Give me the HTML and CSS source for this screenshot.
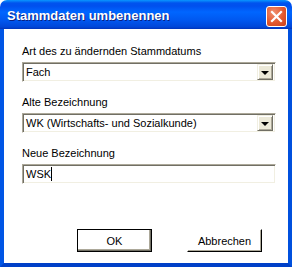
FILE: index.html
```html
<!DOCTYPE html>
<html lang="de">
<head>
    <meta charset="UTF-8">
    <title>Stammdaten umbenennen</title>
    <link rel="stylesheet" href="styles.css">
</head>
<body>
    <div class="window">
        <!-- Titelleiste -->
        <div class="titlebar">
            <span class="title">Stammdaten umbenennen</span>
            <div class="close">
                <svg width="13" height="13" viewBox="0 0 13 13">
                    <path d="M2 2 L11 11 M11 2 L2 11" stroke="#fff" stroke-width="2.2" stroke-linecap="square" fill="none"/>
                </svg>
            </div>
        </div>

        <!-- Inhalt -->
        <div class="client">
            <div class="field">
                <div class="label">Art des zu ändernden Stammdatums</div>
                <div class="combo">
                    <span class="value">Fach</span>
                    <span class="drop"><span class="arrow"></span></span>
                </div>
            </div>

            <div class="field">
                <div class="label">Alte Bezeichnung</div>
                <div class="combo">
                    <span class="value">WK (Wirtschafts- und Sozialkunde)</span>
                    <span class="drop"><span class="arrow"></span></span>
                </div>
            </div>

            <div class="field">
                <div class="label">Neue Bezeichnung</div>
                <div class="edit">
                    <span class="value">WSK</span><span class="caret"></span>
                </div>
            </div>

            <div class="buttons">
                <div class="btn default">OK</div>
                <div class="btn">Abbrechen</div>
            </div>
        </div>
    </div>
</body>
</html>
```

FILE: styles.css
```css
/* General */
body {
    margin: 0;
    padding: 0;
    background: #ffffff;
    font-family: "Liberation Sans", Arial, sans-serif;
    font-size: 11px;
    color: #000000;
}

/* Fenster */
.window {
    width: 292px;
    height: 267px;
    display: flex;
    flex-direction: column;
}

.titlebar {
    height: 29px;
    flex: none;
    display: flex;
    align-items: center;
    justify-content: space-between;
    padding: 0 5px 0 7px;
    border-radius: 7px 7px 0 0;
    background: linear-gradient(to bottom,
        #0997ff 0px, #0053ee 3px, #0050ee 6px, #0066ff 12px,
        #0058f0 20px, #0046d8 27px, #0033b8 29px);
    box-sizing: border-box;
}

.title {
    color: #ffffff;
    font-family: "Liberation Sans", Arial, sans-serif;
    font-weight: bold;
    font-size: 13px;
    text-shadow: 1px 1px 0 #0a1f80;
    margin-top: 1px;
}

.close {
    width: 21px;
    height: 21px;
    box-sizing: border-box;
    border: 1px solid #ffffff;
    border-radius: 3px;
    background: radial-gradient(circle at 35% 30%, #f09070 0%, #e2582f 55%, #c8401c 100%);
    display: flex;
    align-items: center;
    justify-content: center;
    margin-top: 3px;
}

.client {
    flex: 1;
    background: #ffffff;
    border-left: 4px solid #0055e5;
    border-right: 4px solid #0050de;
    border-bottom: 4px solid #0040c8;
    padding: 15px 12px 0 18px;
    display: flex;
    flex-direction: column;
}

/* Felder */
.field {
    display: flex;
    flex-direction: column;
    margin-bottom: 13px;
}

.label {
    line-height: 14px;
    height: 14px;
    margin-bottom: 4px;
}

.combo,
.edit {
    height: 20px;
    box-sizing: border-box;
    border: 1px solid;
    border-color: #aca899 #ffffff #ffffff #aca899;
    box-shadow: inset 1px 1px 0 #716f64, inset -1px -1px 0 #f1efe2;
    display: flex;
    align-items: center;
    padding: 0 2px 0 3px;
    background: #ffffff;
}

.value {
    flex: 1;
    line-height: 14px;
}

.edit .value {
    flex: none;
}

.caret {
    width: 1px;
    height: 14px;
    background: #000000;
}

.drop {
    width: 16px;
    height: 16px;
    box-sizing: border-box;
    background: #ece9d8;
    border: 1px solid;
    border-color: #f1efe2 #716f64 #716f64 #f1efe2;
    box-shadow: inset 1px 1px 0 #ffffff, inset -1px -1px 0 #aca899;
    display: flex;
    align-items: center;
    justify-content: center;
}

.arrow {
    width: 0;
    height: 0;
    border-left: 4px solid transparent;
    border-right: 4px solid transparent;
    border-top: 4px solid #000000;
    margin-top: 1px;
}

/* Buttons */
.buttons {
    display: flex;
    justify-content: flex-end;
    gap: 35px;
    margin-top: auto;
    margin-right: 14px;
    margin-bottom: 11px;
}

.btn {
    width: 75px;
    height: 23px;
    box-sizing: border-box;
    border: 1px solid;
    border-color: #ffffff #000000 #000000 #ffffff;
    box-shadow: inset -1px -1px 0 #aca899;
    display: flex;
    align-items: center;
    justify-content: center;
    background: #ffffff;
}

.btn.default {
    border-color: #000000;
    box-shadow: inset -1px -1px 0 #716f64, inset -2px -2px 0 #aca899;
}
```
